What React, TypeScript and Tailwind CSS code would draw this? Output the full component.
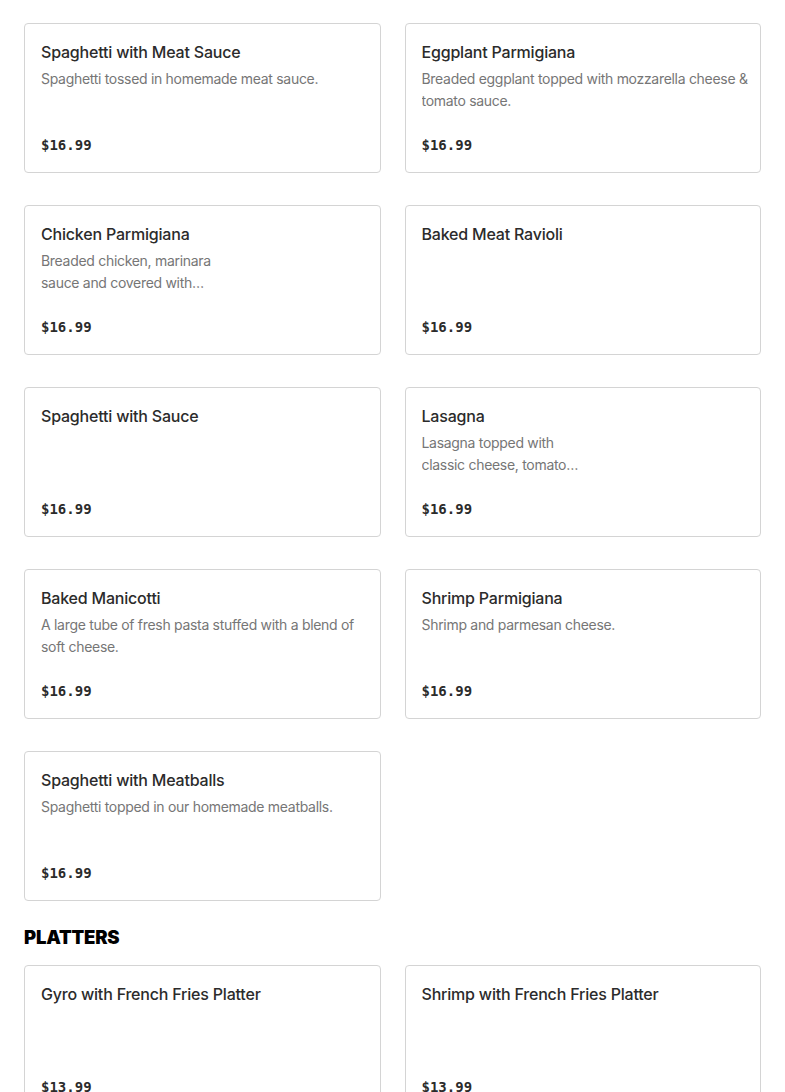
import React from "react";

type Item = { name: string; desc?: string; price: string; narrow?: boolean };

const pasta: Item[] = [
  { name: "Spaghetti with Meat Sauce", desc: "Spaghetti tossed in homemade meat sauce.", price: "$16.99" },
  { name: "Eggplant Parmigiana", desc: "Breaded eggplant topped with mozzarella cheese & tomato sauce.", price: "$16.99" },
  { name: "Chicken Parmigiana", desc: "Breaded chicken, marinara sauce and covered with mozzarella cheese.", price: "$16.99", narrow: true },
  { name: "Baked Meat Ravioli", price: "$16.99" },
  { name: "Spaghetti with Sauce", price: "$16.99" },
  { name: "Lasagna", desc: "Lasagna topped with classic cheese, tomato sauce and ricotta.", price: "$16.99", narrow: true },
  { name: "Baked Manicotti", desc: "A large tube of fresh pasta stuffed with a blend of soft cheese.", price: "$16.99" },
  { name: "Shrimp Parmigiana", desc: "Shrimp and parmesan cheese.", price: "$16.99" },
  { name: "Spaghetti with Meatballs", desc: "Spaghetti topped in our homemade meatballs.", price: "$16.99" },
];

const platters: Item[] = [
  { name: "Gyro with French Fries Platter", price: "$13.99" },
  { name: "Shrimp with French Fries Platter", price: "$13.99" },
];

const MenuCard = ({ item }: { item: Item }) => (
  <div className="flex flex-col h-[150px] border border-[#d4d4d4] rounded-[4px] bg-white pl-4 pr-[8px] pt-4 pb-[15px]">
    <h3 className="text-[16px] leading-6 font-medium text-[#2b2b2b] tracking-[-0.2px]">{item.name}</h3>
    {item.desc && (
      <p
        className={`mt-1 text-[14px] leading-[22px] text-[#767676] tracking-[-0.3px] line-clamp-2 ${item.narrow ? "max-w-[174px]" : ""}`}
      >
        {item.desc}
      </p>
    )}
    <span className="mt-auto text-[14px] leading-6 font-bold text-[#2b2b2b] font-['DejaVu_Sans_Mono',monospace]">
      {item.price}
    </span>
  </div>
);

const App = () => {
  return (
    <main className="min-h-screen bg-white px-6 pt-[23px] font-['Inter',sans-serif]">
      <div className="grid grid-cols-2 gap-x-6 gap-y-8">
        {pasta.map((item) => (
          <MenuCard key={item.name} item={item} />
        ))}
      </div>

      <h2 className="mt-6 mb-4 text-[18.5px] leading-6 font-black text-black tracking-[-0.2px]">PLATTERS</h2>

      <div className="grid grid-cols-2 gap-x-6 gap-y-8">
        {platters.map((item) => (
          <MenuCard key={item.name} item={item} />
        ))}
      </div>
    </main>
  );
};

export default App;
